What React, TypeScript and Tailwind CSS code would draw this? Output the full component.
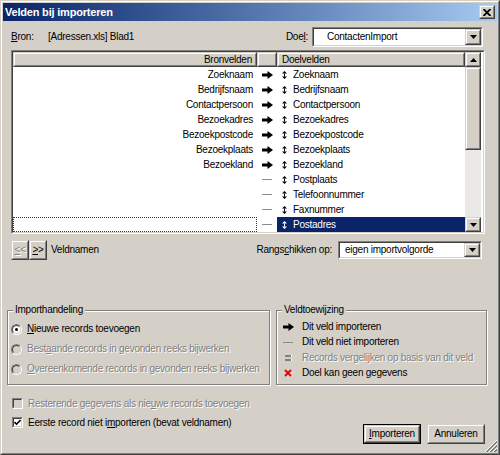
import React from 'react';

const disabledText = 'text-[#808080] [text-shadow:1px_1px_0_#fff]';

function Raised({ className = '', inner = 'justify-center', children }: { className?: string; inner?: string; children?: React.ReactNode }) {
  return (
    <div className={`border border-t-[#d4d0c8] border-l-[#d4d0c8] border-r-[#404040] border-b-[#404040] ${className}`}>
      <div className={`h-full w-full border border-t-white border-l-white border-r-[#808080] border-b-[#808080] bg-[#d4d0c8] flex items-center ${inner}`}>
        {children}
      </div>
    </div>
  );
}

function Sunken({ className = '', inner = '', children }: { className?: string; inner?: string; children?: React.ReactNode }) {
  return (
    <div className={`border border-t-[#808080] border-l-[#808080] border-r-white border-b-white ${className}`}>
      <div className={`h-full w-full border border-t-[#404040] border-l-[#404040] border-r-[#d4d0c8] border-b-[#d4d0c8] ${inner}`}>
        {children}
      </div>
    </div>
  );
}

function TriDown() {
  return (
    <svg width="7" height="4" viewBox="0 0 7 4">
      <polygon points="0,0 7,0 3.5,4" fill="#000" />
    </svg>
  );
}

function TriUp() {
  return (
    <svg width="7" height="4" viewBox="0 0 7 4">
      <polygon points="0,4 7,4 3.5,0" fill="#000" />
    </svg>
  );
}

function Combo({ className, text, pad }: { className: string; text: string; pad: string }) {
  return (
    <Sunken className={className} inner="bg-white flex items-stretch">
      <span className={`flex-1 flex items-center ${pad}`}>{text}</span>
      <Raised className="w-[16px]">
        <TriDown />
      </Raised>
    </Sunken>
  );
}

function ArrowIcon() {
  return (
    <svg width="11" height="8" viewBox="0 0 11 8">
      <rect x="0" y="2.5" width="6" height="3" fill="#000" />
      <polygon points="5.5,0 11,4 5.5,8" fill="#000" />
    </svg>
  );
}

function UpDown() {
  return (
    <svg width="5" height="8" viewBox="0 0 5 8" fill="currentColor">
      <polygon points="2.5,0 5,2.5 0,2.5" />
      <rect x="2" y="2.5" width="1" height="3" />
      <polygon points="0,5.5 5,5.5 2.5,8" />
    </svg>
  );
}

function Dash() {
  return <div className="w-[10px] h-px bg-[#8c8c8c]" />;
}

function Radio({ checked, disabled }: { checked?: boolean; disabled?: boolean }) {
  return (
    <div className="w-[11px] h-[11px] rounded-full border border-t-[#808080] border-l-[#808080] border-r-white border-b-white">
      <div
        className={`w-full h-full rounded-full border border-t-[#404040] border-l-[#404040] border-r-[#d4d0c8] border-b-[#d4d0c8] flex items-center justify-center ${
          disabled ? 'bg-[#d4d0c8]' : 'bg-white'
        }`}
      >
        {checked && <div className="w-[3px] h-[3px] rounded-full bg-black" />}
      </div>
    </div>
  );
}

function Checkbox({ checked, disabled }: { checked?: boolean; disabled?: boolean }) {
  return (
    <Sunken className="w-[11px] h-[11px]" inner={`flex items-center justify-center ${disabled ? 'bg-[#d4d0c8]' : 'bg-white'}`}>
      {checked && (
        <svg width="7" height="7" viewBox="0 0 7 7">
          <polyline points="0.5,3 2.5,5.2 6.5,1" fill="none" stroke="#000" strokeWidth="1.6" />
        </svg>
      )}
    </Sunken>
  );
}

function Group({ title, className, children }: { title: string; className: string; children: React.ReactNode }) {
  return (
    <div className={`relative border border-[#808080] shadow-[inset_1px_1px_0_#fff,1px_1px_0_#fff] ${className}`}>
      <span className="absolute left-[5px] -top-[7px] px-[2px] leading-[12px] bg-[#d4d0c8]">{title}</span>
      {children}
    </div>
  );
}

const rows: [string, string, boolean][] = [
  ['Zoeknaam', 'Zoeknaam', true],
  ['Bedrijfsnaam', 'Bedrijfsnaam', true],
  ['Contactpersoon', 'Contactpersoon', true],
  ['Bezoekadres', 'Bezoekadres', true],
  ['Bezoekpostcode', 'Bezoekpostcode', true],
  ['Bezoekplaats', 'Bezoekplaats', true],
  ['Bezoekland', 'Bezoekland', true],
  ['', 'Postplaats', false],
  ['', 'Telefoonnummer', false],
  ['', 'Faxnummer', false],
  ['', 'Postadres', false],
];

function FieldList() {
  return (
    <Sunken className="mt-[3px] ml-[8px] w-[474px] h-[184px]" inner="bg-white flex">
      <div className="w-[452px] flex flex-col">
        {/* header */}
        <div className="h-[15px] flex">
          <Raised className="w-[244px]" inner="justify-end pr-[3px]">Bronvelden</Raised>
          <Raised className="w-[20px]" />
          <Raised className="flex-1" inner="justify-start pl-[3px]">Doelvelden</Raised>
        </div>
        {rows.map(([src, dst, mapped], i) => {
          const last = i === rows.length - 1;
          return (
            <div key={dst} className="h-[15px] flex">
              <div className={`w-[244px] flex items-center justify-end pr-[4px] ${last ? 'border border-dotted border-[#333]' : ''}`}>{src}</div>
              <div className="w-[20px] flex items-center justify-center">{mapped ? <ArrowIcon /> : <Dash />}</div>
              <div className={`flex-1 flex items-center pl-[5px] gap-[6px] ${last ? 'bg-[#0a246a] text-white' : ''}`}>
                <UpDown />
                {dst}
              </div>
            </div>
          );
        })}
      </div>
      {/* scrollbar */}
      <div className="w-[16px] flex flex-col">
        <Raised className="h-[15px]">
          <TriUp />
        </Raised>
        <Raised className="h-[83px]" />
        <div className="flex-1 bg-[#ebe9e5]" />
        <Raised className="h-[15px]">
          <TriDown />
        </Raised>
      </div>
    </Sunken>
  );
}

function SizeGrip() {
  return (
    <svg className="absolute right-0 bottom-0" width="12" height="12" viewBox="0 0 12 12">
      {[0, 4, 8].map((o) => (
        <g key={o}>
          <line x1={12} y1={o + 1} x2={o + 1} y2={12} stroke="#808080" />
          <line x1={12} y1={o + 2} x2={o + 2} y2={12} stroke="#808080" />
          <line x1={12} y1={o} x2={o} y2={12} stroke="#fff" />
        </g>
      ))}
    </svg>
  );
}

export default function App() {
  return (
    <div className="w-[500px] h-[455px] bg-[#d4d0c8] border border-t-[#d4d0c8] border-l-[#d4d0c8] border-r-[#404040] border-b-[#404040] text-[10px] leading-none tracking-[-0.25px] text-black [font-family:'Liberation_Sans',Arial,sans-serif]">
      <div className="h-full border border-t-white border-l-white border-r-[#808080] border-b-[#808080] p-px flex flex-col">
        {/* Title bar */}
        <div className="h-[18px] flex items-center pl-[2px] bg-linear-to-r from-[#0a246a] to-[#a6caf0]">
          <span className="text-white font-bold text-[11px] tracking-[-0.2px]">Velden bij importeren</span>
          <Raised className="ml-auto mr-[2px] w-[16px] h-[14px]">
            <svg width="8" height="7" viewBox="0 0 8 7">
              <path d="M0.5 0 L7.5 7 M7.5 0 L0.5 7" stroke="#000" strokeWidth="1.8" />
            </svg>
          </Raised>
        </div>

        <div className="relative flex-1 flex flex-col">
          {/* Bron / Doel */}
          <div className="mt-[6px] h-[20px] flex items-center pl-[8px] pr-[14px]">
            <span className="w-[37px]">
              <span className="underline">B</span>ron:
            </span>
            <span className="flex-1">[Adressen.xls] Blad1</span>
            <span className="mr-[4px]">
              Doe<span className="underline">l</span>:
            </span>
            <Combo className="w-[171px] h-[20px]" text="ContactenImport" pad="pl-[13px]" />
          </div>

          <FieldList />

          {/* Veldnamen / Rangschikken */}
          <div className="mt-[6px] h-[20px] flex items-center pl-[8px] pr-[15px]">
            <Raised className="w-[18px] h-[20px]">
              <span className={disabledText}>
                <span className="underline">&lt;</span>&lt;
              </span>
            </Raised>
            <Raised className="w-[18px] h-[20px]">
              <span>
                <span className="underline">&gt;</span>&gt;
              </span>
            </Raised>
            <span className="ml-[4px]">Veldnamen</span>
            <span className="ml-auto mr-[6px]">
              Rangs<span className="underline">c</span>hikken op:
            </span>
            <Combo className="w-[144px] h-[18px]" text="eigen importvolgorde" pad="pl-[5px]" />
          </div>

          {/* Groups */}
          <div className="mt-[50px] flex pl-[4px] gap-[6px]">
            <Group title="Importhandeling" className="w-[263px] h-[75px] pt-[8px] pl-[3px]">
              <div className="h-[20px] flex items-center gap-[5px]">
                <Radio checked />
                <span>
                  <span className="underline">N</span>ieuwe records toevoegen
                </span>
              </div>
              <div className="h-[20px] flex items-center gap-[5px]">
                <Radio disabled />
                <span className={disabledText}>
                  Best<span className="underline">a</span>ande records in gevonden reeks bijwerken
                </span>
              </div>
              <div className="h-[20px] flex items-center gap-[5px]">
                <Radio disabled />
                <span className={disabledText}>
                  <span className="underline">O</span>vereenkomende records in gevonden reeks bijwerken
                </span>
              </div>
            </Group>
            <Group title="Veldtoewijzing" className="w-[211px] h-[75px] pt-[8px] pl-[6px]">
              <div className="h-[15.5px] flex items-center">
                <span className="w-[19px] flex">
                  <ArrowIcon />
                </span>
                <span>Dit veld importeren</span>
              </div>
              <div className="h-[15.5px] flex items-center">
                <span className="w-[19px] flex">
                  <Dash />
                </span>
                <span>Dit veld niet importeren</span>
              </div>
              <div className="h-[15.5px] flex items-center">
                <span className="w-[19px] flex pl-[2px]">
                  <svg width="7" height="6" viewBox="0 0 7 6">
                    <rect x="0" y="0" width="6" height="2" fill="#808080" />
                    <rect x="0" y="4" width="6" height="2" fill="#808080" />
                    <rect x="6" y="0" width="1" height="2" fill="#fff" />
                    <rect x="6" y="4" width="1" height="2" fill="#fff" />
                  </svg>
                </span>
                <span className={disabledText}>Records vergelijken op basis van dit veld</span>
              </div>
              <div className="h-[15.5px] flex items-center">
                <span className="w-[19px] flex pl-[1px]">
                  <svg width="8" height="8" viewBox="0 0 8 8">
                    <path d="M1 1 L7 7 M7 1 L1 7" stroke="#e00000" strokeWidth="1.8" />
                  </svg>
                </span>
                <span>Doel kan geen gegevens</span>
              </div>
            </Group>
          </div>

          {/* Bottom */}
          <div className="flex">
            <div className="mt-[9px] ml-[9px] flex flex-col">
              <div className="h-[19px] flex items-center gap-[5px]">
                <Checkbox disabled />
                <span className={disabledText}>
                  Resterende gegevens als nie<span className="underline">u</span>we records toevoegen
                </span>
              </div>
              <div className="h-[19px] flex items-center gap-[5px]">
                <Checkbox checked />
                <span>
                  Eerste record niet i<span className="underline">m</span>porteren (bevat veldnamen)
                </span>
              </div>
            </div>
            <div className="ml-auto mt-[39px] mr-[12px] flex gap-[6px]">
              <div className="w-[58px] h-[20px] border border-black">
                <Raised className="h-full">
                  <span>
                    <span className="underline">I</span>mporteren
                  </span>
                </Raised>
              </div>
              <Raised className="w-[58px] h-[20px]">Annuleren</Raised>
            </div>
          </div>

          <SizeGrip />
        </div>
      </div>
    </div>
  );
}
